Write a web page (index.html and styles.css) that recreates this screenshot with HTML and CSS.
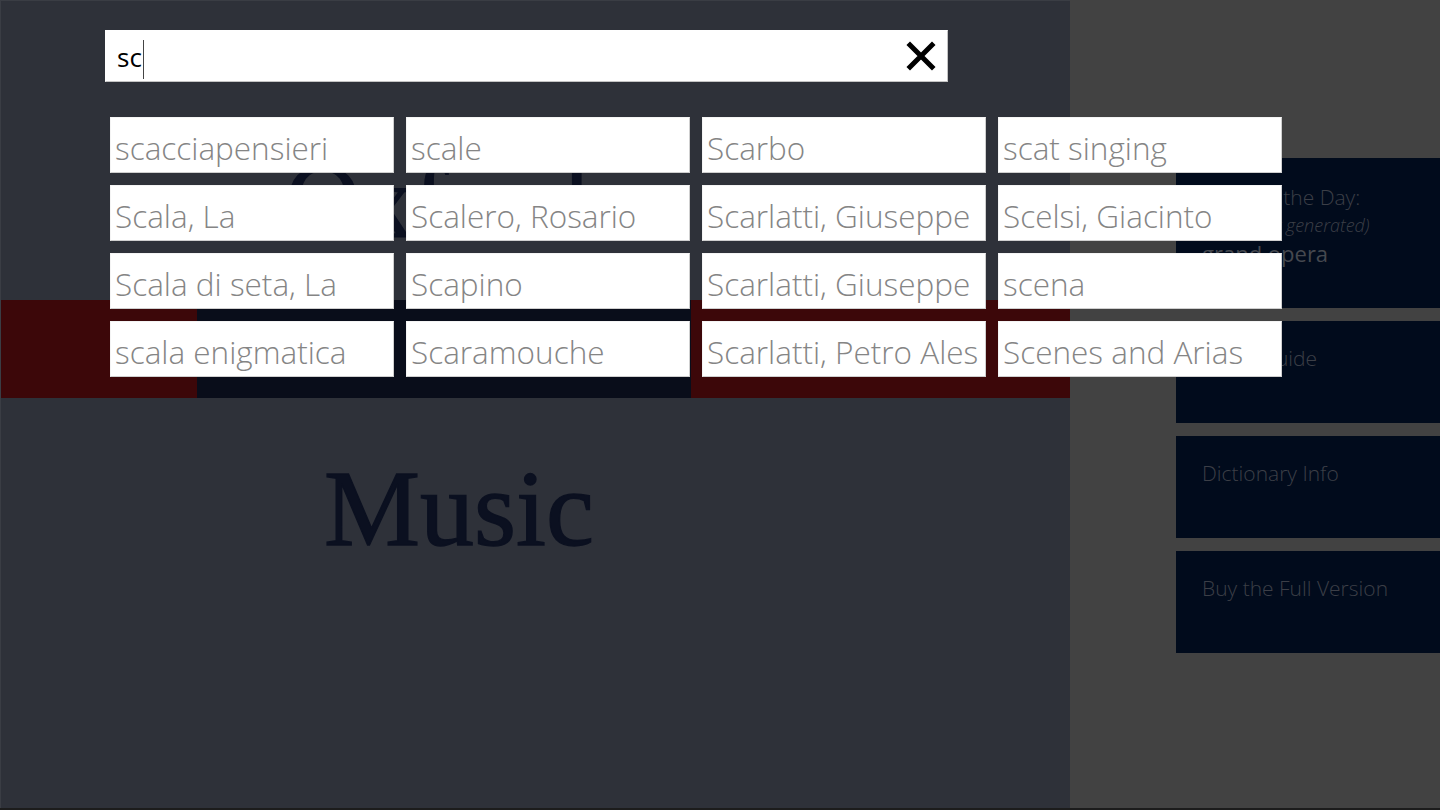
FILE: index.html
```html
<!DOCTYPE html>
<html lang="en">
<head>
<meta charset="utf-8">
<title>Oxford Dictionary of Music</title>
<link rel="stylesheet" href="styles.css">
</head>
<body>
<div class="app">
  <main class="hub">
    <div class="oxford">Oxford</div>
    <div class="band">
      <span class="band-red band-left"></span>
      <span class="band-navy"></span>
      <span class="band-red band-right"></span>
    </div>
    <div class="music">Music</div>
  </main>

  <aside class="side">
    <div class="tile tile-wotd">
      <div class="wotd-title">Word of the Day:</div>
      <div class="wotd-note">(randomly generated)</div>
      <div class="wotd-word">grand opera</div>
    </div>
    <div class="tile"><div class="tile-label">Quick Guide</div></div>
    <div class="tile"><div class="tile-label">Dictionary Info</div></div>
    <div class="tile"><div class="tile-label">Buy the Full Version</div></div>
  </aside>

  <div class="search-layer">
    <div class="searchbox">
      <div class="query"><span class="query-text">sc</span><span class="caret"></span></div>
      <button class="clear" aria-label="Clear">
        <svg width="30" height="30" viewBox="0 0 30 30">
          <path d="M4 4 L26 26 M26 4 L4 26" stroke="#000" stroke-width="5" stroke-linecap="square" fill="none"/>
        </svg>
      </button>
    </div>
    <ul class="suggestions">
      <li class="sugg">scacciapensieri</li>
      <li class="sugg">scale</li>
      <li class="sugg">Scarbo</li>
      <li class="sugg">scat singing</li>
      <li class="sugg">Scala, La</li>
      <li class="sugg">Scalero, Rosario</li>
      <li class="sugg">Scarlatti, Giuseppe</li>
      <li class="sugg">Scelsi, Giacinto</li>
      <li class="sugg">Scala di seta, La</li>
      <li class="sugg">Scapino</li>
      <li class="sugg">Scarlatti, Giuseppe</li>
      <li class="sugg">scena</li>
      <li class="sugg">scala enigmatica</li>
      <li class="sugg">Scaramouche</li>
      <li class="sugg">Scarlatti, Petro Ales</li>
      <li class="sugg">Scenes and Arias</li>
    </ul>
  </div>
</div>
</body>
</html>
```

FILE: styles.css
```css
* { box-sizing: border-box; }

html, body {
  margin: 0;
  padding: 0;
  width: 1440px;
  height: 810px;
  overflow: hidden;
  background: #1c1c1c;
}

.app {
  position: relative;
  display: flex;
  width: 1440px;
  height: 808px;
  font-family: "Open Sans", "Noto Sans", sans-serif;
}

/* ---------- hub (left) ---------- */
.hub {
  width: 1070px;
  height: 808px;
  background: #2e3139;
  border-top: 1px solid #3a3d44;
  border-left: 1px solid #3a3d44;
  padding-top: 141px;
}

.oxford {
  font-family: "Liberation Serif", "Times New Roman", serif;
  font-size: 105px;
  line-height: 120px;
  color: #0b1020;
  -webkit-text-stroke: 1.2px #0b1020;
  padding-left: 284px;
}

.band {
  display: flex;
  height: 98px;
  margin-top: 38px;
}

.band-red { background: #3c0709; }
.band-left { width: 196px; }
.band-navy { width: 494px; background: #090d1a; }
.band-right { flex: 1; }

.music {
  font-family: "Liberation Serif", "Times New Roman", serif;
  font-size: 108px;
  line-height: 120px;
  color: #0b1020;
  -webkit-text-stroke: 1.4px #0b1020;
  padding-left: 323px;
  margin-top: 51px;
}

/* ---------- side (right) ---------- */
.side {
  flex: 1;
  height: 808px;
  background: #424242;
  padding: 158px 0 0 106px;
  display: flex;
  flex-direction: column;
  gap: 13px;
}

.tile {
  background: #010b1c;
  height: 102px;
  padding: 22px 0 0 26px;
  color: #3c3f47;
  font-weight: 300;
}

.tile-wotd {
  height: 150px;
  padding-top: 24px;
}

.tile-label,
.wotd-title {
  font-size: 21px;
  line-height: 30px;
  white-space: nowrap;
}

.wotd-note {
  font-size: 18px;
  line-height: 26px;
  font-style: italic;
}

.wotd-word {
  font-size: 22px;
  line-height: 30px;
  font-weight: 500;
  color: #45484f;
}

/* ---------- search overlay ---------- */
.search-layer {
  position: absolute;
  top: 0;
  left: 0;
  width: 1440px;
  padding: 30px 0 0 105px;
}

.searchbox {
  width: 843px;
  height: 52px;
  background: #fff;
  border: 1px solid #c4c4c4;
  border-top-color: #fff;
  border-left-color: #fff;
  display: flex;
  align-items: center;
  justify-content: space-between;
  padding: 0 11px 0 11px;
}

.query {
  display: flex;
  align-items: center;
  height: 40px;
}

.query-text {
  font-size: 26px;
  line-height: 40px;
  color: #000;
  padding-top: 2px;
}

.caret {
  display: block;
  width: 1px;
  height: 39px;
  background: #444;
  margin-left: 1px;
  margin-top: 6px;
}

.clear {
  border: 0;
  background: transparent;
  padding: 0;
  width: 30px;
  height: 30px;
  display: block;
}

.clear svg { display: block; }

.suggestions {
  list-style: none;
  margin: 35px 0 0 5px;
  padding: 0;
  display: grid;
  grid-template-columns: repeat(4, 284px);
  grid-auto-rows: 56px;
  column-gap: 12px;
  row-gap: 12px;
}

.sugg {
  background: #fff;
  border: 1px solid #cfcfcf;
  border-top-color: #f4f4f4;
  border-left-color: #f4f4f4;
  font-size: 31.5px;
  font-weight: 300;
  line-height: 40px;
  color: #858585;
  padding: 10px 0 0 4px;
  white-space: nowrap;
  overflow: hidden;
}
```
